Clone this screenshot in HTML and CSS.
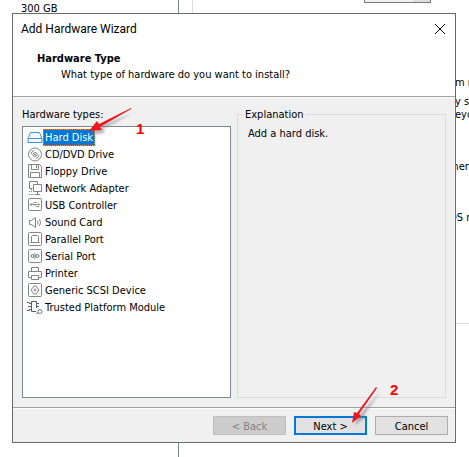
FILE: index.html
```html
<!DOCTYPE html>
<html lang="en">
<head>
    <meta charset="UTF-8">
    <meta name="viewport" content="width=device-width, initial-scale=1.0">
    <title>Add Hardware Wizard</title>
    <link rel="stylesheet" href="styles.css">
</head>
<body>
    <div class="parent-window">
        <div class="device-pane">300 GB</div>
        <div class="settings-pane">
            <div class="settings-combo"><span></span></div>
            <div class="settings-text">
                <p class="gap-first">m r</p>
                <p class="gap-small">y s</p>
                <p>eyo</p>
                <p class="gap-small tucked">3</p>
                <p class="gap-medium tucked">men</p>
                <p class="gap-large tucked">OS r</p>
            </div>
        </div>
    </div>

    <main class="dialog">
        <div class="title-bar">
            <h1>Add Hardware Wizard</h1>
            <button class="close" aria-label="Close">
                <svg width="12" height="12" viewBox="0 0 12 12"><path d="M1 1L11 11M11 1L1 11" stroke="#000" fill="none"/></svg>
            </button>
        </div>
        <header class="page-header">
            <h2>Hardware Type</h2>
            <p>What type of hardware do you want to install?</p>
        </header>

        <div class="content">
            <div class="types">
                <div class="types-label" id="types-label">Hardware types:</div>
                <ul class="list" role="listbox" aria-labelledby="types-label" tabindex="0">
                    <li role="option" aria-selected="true" class="selected">
                        <svg class="icon" viewBox="0 0 16 16"><path d="M3.500 2.500H12.500L15 8.500V12.500H1V8.500Z" fill="#eef7fd" stroke="#4a91c4"/><path d="M1 8.500H15" stroke="#4a91c4"/></svg>
                        <span>Hard Disk</span>
                    </li>
                    <li role="option">
                        <svg class="icon" viewBox="0 0 16 16"><circle cx="8" cy="7.500" r="6.500"/><circle cx="8" cy="7.500" r="2"/><circle cx="8" cy="7.500" r="0.500"/><path d="M4 7Q4.500 4 7 3.500M12 8Q11.500 11 9 11.500"/></svg>
                        <span>CD/DVD Drive</span>
                    </li>
                    <li role="option">
                        <svg class="icon" viewBox="0 0 16 16"><path d="M1.500 0.500H12.500L14.500 2.500V13.500H1.500Z"/><path d="M4.500 0.500V5.500H11.500V0.500M9.500 1V4M3.500 13V8.500H12.500V13"/></svg>
                        <span>Floppy Drive</span>
                    </li>
                    <li role="option">
                        <svg class="icon" viewBox="0 0 16 16"><path d="M5.500 7.500H2.500V0.500H10.500V3"/><path d="M6.500 3.500H14.500V10.500H6.500ZM10.500 10.500V13M8 13.500H13"/><path d="M4.500 8V10M2 10.500H6M1.500 13.500H8" stroke-dasharray="1 1"/></svg>
                        <span>Network Adapter</span>
                    </li>
                    <li role="option">
                        <svg class="icon" viewBox="0 0 16 16"><rect x="1.500" y="0.500" width="13" height="12" rx="1"/><path d="M3.500 6.500H12.500M5 6.500L7 4.500H9M7 6.500L9 8.500H11" stroke="#999"/><path d="M3 5.500H5V7.500H3ZM9 4H10V5H9ZM11 8H12V9H11ZM11.500 5L13 6.500L11.500 8Z" fill="#888" stroke="none"/></svg>
                        <span>USB Controller</span>
                    </li>
                    <li role="option">
                        <svg class="icon" viewBox="0 0 16 16"><path d="M2.500 5.500H4.500L8.500 2.500V12.500L4.500 9.500H2.500Z"/><path d="M10.500 5.500Q11.500 7.500 10.500 9.500M12.500 4Q14.500 7.500 12.500 11"/></svg>
                        <span>Sound Card</span>
                    </li>
                    <li role="option">
                        <svg class="icon" viewBox="0 0 16 16"><rect x="1.500" y="0.500" width="13" height="13" rx="1"/><path d="M4.500 10V4.500L5.500 3.500H10.500L11.500 4.500V10M3.500 10.500H12.500"/></svg>
                        <span>Parallel Port</span>
                    </li>
                    <li role="option">
                        <svg class="icon" viewBox="0 0 16 16"><rect x="1.500" y="0.500" width="13" height="13" rx="1"/><path d="M8 4V10"/><circle cx="5.500" cy="7" r="1.500" stroke="#597580"/><circle cx="10.500" cy="7" r="1.500" stroke="#597580"/></svg>
                        <span>Serial Port</span>
                    </li>
                    <li role="option">
                        <svg class="icon" viewBox="0 0 16 16"><path d="M4.500 5.500V1.500H11.500V5.500M4 11.500H1.500V5.500H14.500V11.500H12"/><path d="M4.500 9.500H11.500V13.500H4.500Z"/></svg>
                        <span>Printer</span>
                    </li>
                    <li role="option">
                        <svg class="icon" viewBox="0 0 16 16"><rect x="1.500" y="0.500" width="13" height="13" rx="1"/><path d="M7 3L4 7L7 11M9 3L12 7L9 11M7 3H9M7 11H9"/><circle cx="8" cy="7" r="1"/></svg>
                        <span>Generic SCSI Device</span>
                    </li>
                    <li role="option">
                        <svg class="icon" viewBox="0 0 16 16"><g stroke="#4d636d"><path d="M9 11.500H4.500V1.500H9.500V8"/><path d="M0 2.500H2.500V3.500H4M1 6.500H4M0 10.500H2.500V9.500H4M10 3.500H12M10 6.500H12"/></g><g stroke="#687f89"><circle cx="13" cy="11.500" r="2"/><path d="M12 12.500L9 13.500"/></g></svg>
                        <span>Trusted Platform Module</span>
                    </li>
                </ul>
            </div>
            <fieldset class="explanation">
                <legend>Explanation</legend>
                <p>Add a hard disk.</p>
            </fieldset>
        </div>

        <footer class="buttons">
            <button class="btn" disabled>&lt; Back</button>
            <button class="btn default">Next &gt;</button>
            <button class="btn">Cancel</button>
        </footer>

        <div class="step step-one">
            <svg width="50" height="30" viewBox="0 0 50 30">
                <path class="shadow" d="M45 5L15 21L17 25L3 27L12 16L13 18Z"/>
                <path class="arrow" d="M43 1L12 19L14 22L1 23L9 13L11 16L43 0Z"/>
            </svg>
            <span>1</span>
        </div>
        <div class="step step-two">
            <svg width="34" height="42" viewBox="0 0 34 42">
                <path class="shadow" d="M30 4L13 28L15 30L4 38L7 26L9 27Z"/>
                <path class="arrow" d="M26 1L8 27L10 29L1 36L3 25L6 26L25 0Z"/>
            </svg>
            <span>2</span>
        </div>
    </main>
</body>
</html>
```

FILE: styles.css
```css
* {
    box-sizing: border-box;
}
body {
    margin: 0;
    position: relative;
    min-height: 100vh;
    overflow: hidden;
    background-color: #fff;
    color: #000;
    font-family: "DejaVu Sans Condensed", "DejaVu Sans", sans-serif;
    font-size: 11px;
    line-height: 13px;
}
h1, h2, p, ul {
    margin: 0;
    padding: 0;
}
button {
    font: inherit;
    color: inherit;
}

/* window behind the dialog */
.parent-window {
    position: absolute;
    inset: 0;
    display: flex;
    overflow: hidden;
}
.device-pane {
    flex: none;
    width: 179px;
    padding: 2px 0 0 21px;
    border-right: 1px solid #828790;
}
.settings-pane {
    flex: 1;
    min-width: 0;
    height: 324px;
    margin-left: 13px;
    border-left: 1px solid #dcdcdc;
    border-bottom: 1px solid #dcdcdc;
}
.settings-combo {
    width: 67px;
    height: 3px;
    margin-left: 171px;
    border: 1px solid #7a7a7a;
    border-top: 0;
    background-color: #f0f0f0;
}
.settings-combo span {
    display: block;
    width: 17px;
    height: 2px;
    margin-left: auto;
    background-color: #dcdcdc;
}
.settings-text {
    margin-left: 262px;
    white-space: nowrap;
}
.gap-first {
    padding-top: 73px;
}
.gap-small {
    padding-top: 6px;
}
.gap-medium {
    padding-top: 20px;
}
.gap-large {
    padding-top: 38px;
}
.tucked {
    margin-left: -6px;
}

.dialog {
    position: relative;
    display: flex;
    flex-direction: column;
    min-height: calc(100vh - 27px);
    margin: 13px 13px 14px 12px;
    border: 1px solid #6b6b6b;
    background-color: #f0f0f0;
}
.title-bar {
    display: flex;
    justify-content: space-between;
    align-items: center;
    height: 30px;
    padding: 0 8px;
    background-color: #fff;
}
.title-bar h1 {
    font-family: Roboto, "Open Sans", sans-serif;
    font-size: 12px;
    font-weight: normal;
}
.close {
    display: flex;
    padding: 1px;
    border: 0;
    background: none;
}
.page-header {
    height: 53px;
    padding: 8px 24px;
    border-bottom: 1px solid #a0a0a0;
    background-color: #fff;
}
.page-header h2 {
    font-size: 11px;
    line-height: 13px;
}
.page-header p {
    margin-top: 3px;
    padding-left: 24px;
}

.content {
    flex: 1;
    display: grid;
    grid-template-columns: 1fr 1fr;
    gap: 6px;
    padding: 10px 9px 9px;
    border-top: 1px solid #fff;
}
.types {
    display: flex;
    flex-direction: column;
}
.types-label {
    height: 18px;
}
.list {
    flex: 1;
    padding: 2px 4px;
    border: 1px solid #828790;
    background-color: #fff;
    list-style: none;
}
.list li {
    display: flex;
    align-items: center;
    height: 17px;
}
.list span {
    padding: 1px;
    border: 1px solid transparent;
    white-space: nowrap;
}
.list .selected span {
    border: 1px dotted #ff8728;
    background-color: #0078d7;
    color: #fff;
}
.icon {
    flex: none;
    width: 16px;
    height: 16px;
    fill: none;
    stroke: #858585;
}
.explanation {
    min-width: 0;
    margin: 0;
    padding: 6px 10px;
    border: 1px solid #dcdcdc;
}
.explanation legend {
    margin-left: -5px;
    padding: 0 2px;
}

.buttons {
    display: flex;
    justify-content: flex-end;
    gap: 8px;
    padding: 8px 7px 7px;
    border-top: 1px solid #a0a0a0;
    box-shadow: inset 0 1px #fff;
}
.btn {
    width: 73px;
    height: 19px;
    padding: 1px 0 0;
    border: 1px solid #adadad;
    background-color: #e1e1e1;
    line-height: 13px;
}
.btn.default {
    border: 2px solid #0078d7;
}
.btn:disabled {
    border-color: #bfbfbf;
    background-color: #ccc;
    color: #838383;
}

/* numbered pointers */
.step {
    position: absolute;
    color: #f00;
    font: bold 15px/14px "Liberation Sans", Arial, sans-serif;
    pointer-events: none;
}
.step svg {
    display: block;
}
.step span {
    position: absolute;
}
.step-one {
    top: 94px;
    left: 75px;
}
.step-one span {
    top: 14px;
    left: 48px;
}
.step-two {
    right: 70px;
    bottom: 13px;
}
.step-two span {
    top: -4px;
    left: 39px;
}
.arrow {
    fill: #f01820;
}
.shadow {
    fill: #777;
    opacity: 0.5;
    filter: blur(1px);
}
```
